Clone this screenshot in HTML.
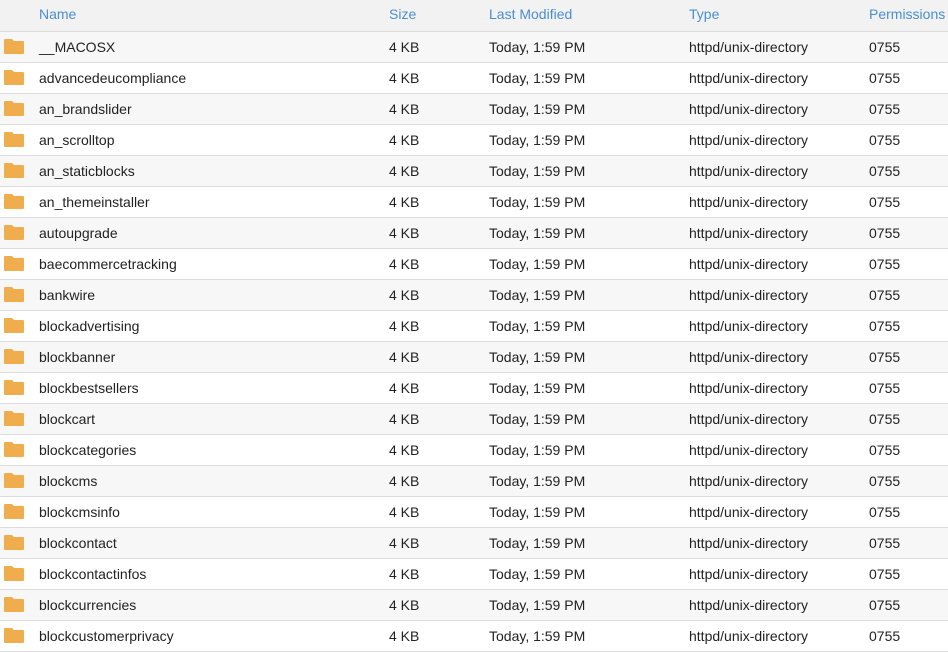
<!DOCTYPE html>
<html><head><meta charset="utf-8"><style>
*{margin:0;padding:0;box-sizing:border-box}
body{width:948px;height:648px;overflow:hidden;background:#fff;font-family:"Liberation Sans",sans-serif;font-size:14px;color:#222}
.r{position:relative;height:31px;border-bottom:1px solid #ddd;white-space:nowrap}
.r span{position:absolute;top:0;line-height:30px}
.h{background:#f2f2f2;color:#4a8dd3;height:32px;border-bottom:1px solid #ddd}
.h span{line-height:29px}
.r:nth-child(odd):not(.h){background:#f7f7f7}
.c1{left:39px}.c2{left:389px}.c3{left:489px}.c4{left:689px}.c5{left:869px}
.f{position:absolute;left:4px;top:7px;width:20px;height:15px}
</style></head><body>
<div class="r h"><span class="c1">Name</span><span class="c2">Size</span><span class="c3">Last Modified</span><span class="c4">Type</span><span class="c5">Permissions</span></div>
<div id="rows"></div>
<script>
var n=["__MACOSX","advancedeucompliance","an_brandslider","an_scrolltop","an_staticblocks","an_themeinstaller","autoupgrade","baecommercetracking","bankwire","blockadvertising","blockbanner","blockbestsellers","blockcart","blockcategories","blockcms","blockcmsinfo","blockcontact","blockcontactinfos","blockcurrencies","blockcustomerprivacy"];
var h="";n.forEach(function(x){h+='<div class="r"><svg class="f" viewBox="0 0 20 15"><path d="M0 1Q0 0 1 0H8L10 2H19Q20 2 20 3V14Q20 15 19 15H1Q0 15 0 14Z" fill="#f0ad4e"/></svg><span class="c1">'+x+'</span><span class="c2">4 KB</span><span class="c3">Today, 1:59 PM</span><span class="c4">httpd/unix-directory</span><span class="c5">0755</span></div>';});
document.getElementById("rows").innerHTML=h;
</script>
</body></html>
